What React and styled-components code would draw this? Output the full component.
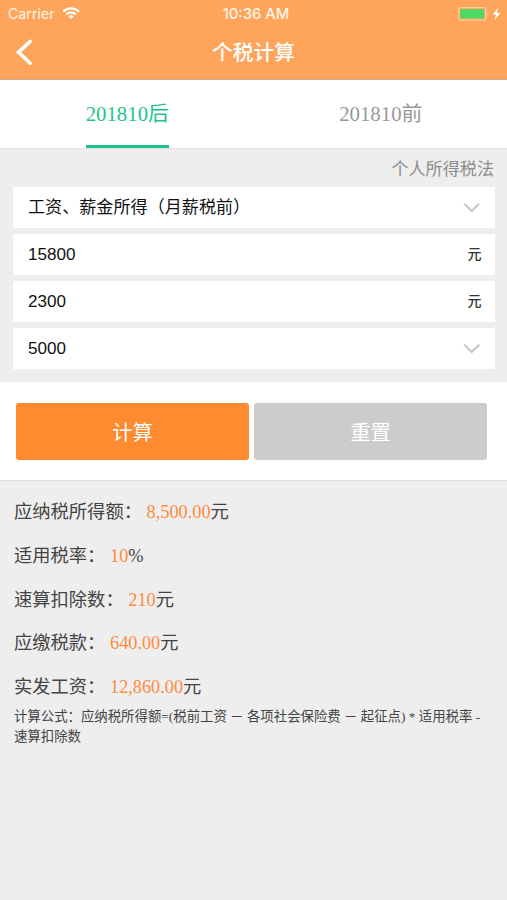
import React, { Component } from 'react'
import styled, { createGlobalStyle } from 'styled-components'

const GlobalStyle = createGlobalStyle`
  * {
    box-sizing: border-box;
  }
  body {
    margin: 0;
    background-color: #eeeeee;
    font-family: 'Liberation Serif', 'Noto Sans CJK SC', serif;
  }
`
const Page = styled.div`
  width: 507px;
  height: 900px;
  overflow: hidden;
  background-color: #eeeeee;
  color: #444444;
`
const Header = styled.header`
  height: 80px;
  background-color: #ffa55b;
  border-bottom: 1px solid #d3a787;
  color: #ffffff;
`
const StatusBar = styled.div`
  height: 27px;
  padding: 0 5px 0 8px;
  display: grid;
  grid-template-columns: 1fr auto 1fr;
  align-items: center;
  font-family: Inter, 'Liberation Sans', sans-serif;
  font-size: 14.2px;
  line-height: 27px;
  color: #fff3e8;
`
const Network = styled.div`
  display: flex;
  align-items: center;
  gap: 7px;
`
const Clock = styled.div`
  font-size: 14.8px;
  font-weight: 500;
  line-height: 25px;
  padding: 2px 0 0 2px;
`
const Power = styled.div`
  display: flex;
  justify-content: flex-end;
`
const NavBar = styled.div`
  height: 50px;
  padding: 0 14px;
  display: grid;
  grid-template-columns: 24px 1fr 24px;
  align-items: center;
`
const BackButton = styled.button`
  display: flex;
  padding: 0;
  border: none;
  background: none;
  color: #ffffff;
`
const Title = styled.h1`
  margin: 0;
  padding-bottom: 2px;
  text-align: center;
  font-family: 'Noto Sans CJK SC', sans-serif;
  font-size: 20.7px;
  font-weight: 500;
  line-height: 48px;
`
const Tabs = styled.nav`
  display: flex;
  height: 69px;
  background-color: #ffffff;
  border-bottom: 1px solid #e4e4e4;
`
const TabCell = styled.div`
  flex: 1;
  display: flex;
  justify-content: center;
  padding-left: 1px;
`
const Tab = styled.button`
  height: 68px;
  padding: 3px 0 0;
  border: none;
  border-bottom: 3px solid ${props => (props.$active ? '#1dc48a' : 'transparent')};
  background: none;
  font-family: inherit;
  font-size: 20.8px;
  line-height: 60px;
  color: ${props => (props.$active ? '#1dc48a' : '#999999')};
`
const Form = styled.section`
  height: 233px;
  padding: 0 13px;
`
const LawLink = styled.div`
  height: 38px;
  text-align: right;
  font-size: 17.1px;
  line-height: 41px;
  color: #8c8c8c;
`
const Fields = styled.div`
  display: grid;
  grid-auto-rows: 41px;
  gap: 6.1px;
`
const Field = styled.div`
  display: flex;
  align-items: center;
  justify-content: space-between;
  width: 481.5px;
  padding: 0 13px 0 15px;
  background-color: #ffffff;
  font-family: 'Liberation Sans', 'Noto Sans CJK SC', sans-serif;
  font-size: 17.1px;
  line-height: 41px;
  color: #111111;
`
const Unit = styled.span`
  padding-bottom: 2px;
  font-size: 14px;
  font-weight: 500;
  line-height: 38px;
  color: #333333;
`
const Actions = styled.section`
  display: flex;
  gap: 5px;
  height: 99px;
  padding: 20.5px 20px 20px 16px;
  background-color: #ffffff;
  border-bottom: 1px solid #dddddd;
`
const ActionButton = styled.button`
  flex: 1;
  height: 57.5px;
  padding: 3px 0 0;
  border: none;
  border-radius: 3px;
  background-color: ${props => (props.$primary ? '#ff8b31' : '#cccccc')};
  color: #ffffff;
  font-family: inherit;
  font-size: 20.3px;
  line-height: 54px;
`
const Results = styled.section`
  padding: 10px 14px 0;
`
const Result = styled.div`
  height: 43.8px;
  font-size: 18.3px;
  line-height: 43.8px;
  white-space: nowrap;
`
const Amount = styled.span`
  color: #ff8b3d;
`
const Formula = styled.p`
  margin: -3px 0 0;
  font-size: 13.4px;
  line-height: 20px;
`

const WifiIcon = () => (
  <svg width="18" height="13" viewBox="0 0 18 13" fill="none" stroke="#ffffff" strokeWidth="2.2">
    <path d="M1.2 4.6a11 11 0 0 1 15.6 0" />
    <path d="M4.1 7.5a7 7 0 0 1 9.8 0" />
    <path d="M9 12 6.3 9.3a3.8 3.8 0 0 1 5.4 0z" fill="#ffffff" stroke="none" />
  </svg>
)

const BatteryIcon = () => (
  <svg width="44" height="14" viewBox="0 0 44 14">
    <rect x="0.7" y="0.7" width="27" height="12.4" rx="2" fill="none" stroke="#ffd0a4" strokeWidth="1.2" />
    <rect x="2.2" y="2.2" width="24" height="9.4" rx="0.8" fill="#4cd964" />
    <path d="M29.2 5v4c1.5-.6 1.5-3.4 0-4z" fill="#ffd0a4" />
    <path d="M40 1 34.6 7.7h3.3l-1.3 5.2 5.6-7h-3.4z" fill="#ffffff" />
  </svg>
)

const BackIcon = () => (
  <svg width="20" height="28" viewBox="0 0 20 28" fill="none" stroke="#ffffff" strokeWidth="3.6">
    <path d="M16.2 3.4 4.6 14.3l11.6 10.9" strokeLinecap="round" />
  </svg>
)

const ChevronIcon = () => (
  <svg width="20" height="12" viewBox="0 0 20 12" fill="none" stroke="#c4c4c4" strokeWidth="2">
    <path d="M2.2 1.6 9.7 9 17.2 1.6" />
  </svg>
)

const results = [
  { label: '应纳税所得额：', value: '8,500.00', unit: '元' },
  { label: '适用税率：', value: '10', unit: '%' },
  { label: '速算扣除数：', value: '210', unit: '元' },
  { label: '应缴税款：', value: '640.00', unit: '元' },
  { label: '实发工资：', value: '12,860.00', unit: '元' }
]

class App extends Component {
  state = { tab: '201810后' }

  render() {
    const tabs = ['201810后', '201810前'].map(tab => (
      <TabCell key={tab}>
        <Tab
          $active={tab === this.state.tab}
          onClick={() => this.setState({ tab })}
        >
          {tab}
        </Tab>
      </TabCell>
    ))
    return (
      <Page>
        <GlobalStyle />
        <Header>
          <StatusBar>
            <Network>
              Carrier
              <WifiIcon />
            </Network>
            <Clock>10:36 AM</Clock>
            <Power>
              <BatteryIcon />
            </Power>
          </StatusBar>
          <NavBar>
            <BackButton>
              <BackIcon />
            </BackButton>
            <Title>个税计算</Title>
          </NavBar>
        </Header>
        <Tabs>{tabs}</Tabs>
        <Form>
          <LawLink>个人所得税法</LawLink>
          <Fields>
            <Field>
              工资、薪金所得（月薪税前）
              <ChevronIcon />
            </Field>
            <Field>
              15800
              <Unit>元</Unit>
            </Field>
            <Field>
              2300
              <Unit>元</Unit>
            </Field>
            <Field>
              5000
              <ChevronIcon />
            </Field>
          </Fields>
        </Form>
        <Actions>
          <ActionButton $primary>计算</ActionButton>
          <ActionButton>重置</ActionButton>
        </Actions>
        <Results>
          {results.map(({ label, value, unit }) => (
            <Result key={label}>
              {label} <Amount>{value}</Amount>
              {unit}
            </Result>
          ))}
          <Formula>
            计算公式：应纳税所得额=(税前工资 － 各项社会保险费 － 起征点) * 适用税率 - 速算扣除数
          </Formula>
        </Results>
      </Page>
    )
  }
}

export default App
